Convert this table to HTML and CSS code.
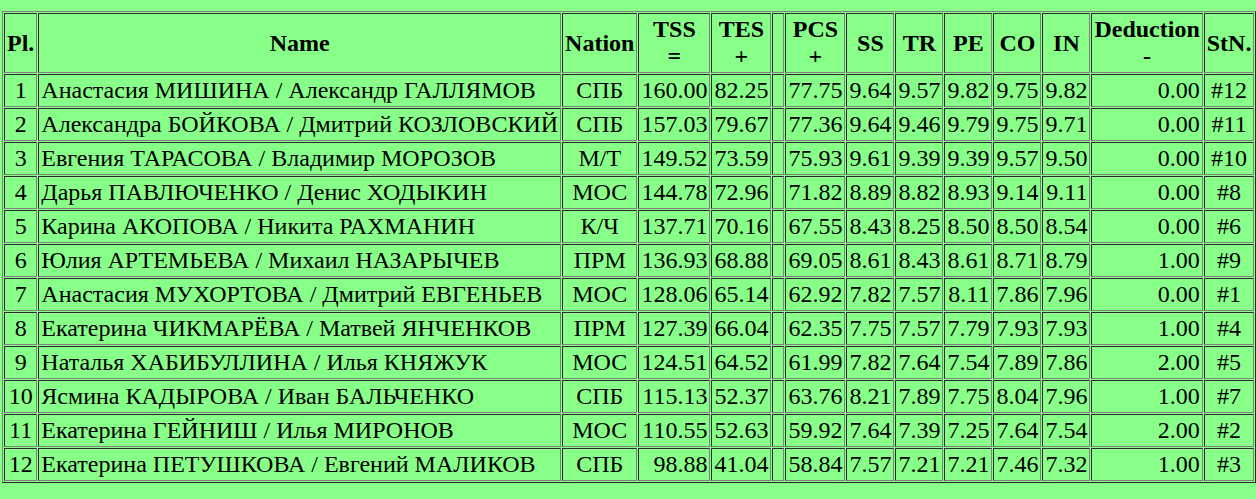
FILE: index.html
```html
<!DOCTYPE html>
<html>
<head>
<meta charset="utf-8">
<title>Results</title>
<link rel="stylesheet" href="styles.css">
</head>
<body>
<table class="res">
<thead>
<tr>
<th>Pl.</th>
<th>Name</th>
<th>Nation</th>
<th>TSS<br>=</th>
<th>TES<br>+</th>
<th class="gap">&nbsp;</th>
<th>PCS<br>+</th>
<th>SS</th>
<th>TR</th>
<th>PE</th>
<th>CO</th>
<th>IN</th>
<th>Deduction<br>-</th>
<th>StN.</th>
</tr>
</thead>
<tbody>
<tr><td class="c">1</td><td class="l">Анастасия МИШИНА / Александр ГАЛЛЯМОВ</td><td class="c">СПБ</td><td class="r">160.00</td><td class="r">82.25</td><td>&nbsp;</td><td class="r">77.75</td><td class="r">9.64</td><td class="r">9.57</td><td class="r">9.82</td><td class="r">9.75</td><td class="r">9.82</td><td class="r">0.00</td><td class="c">#12</td></tr>
<tr><td class="c">2</td><td class="l">Александра БОЙКОВА / Дмитрий КОЗЛОВСКИЙ</td><td class="c">СПБ</td><td class="r">157.03</td><td class="r">79.67</td><td>&nbsp;</td><td class="r">77.36</td><td class="r">9.64</td><td class="r">9.46</td><td class="r">9.79</td><td class="r">9.75</td><td class="r">9.71</td><td class="r">0.00</td><td class="c">#11</td></tr>
<tr><td class="c">3</td><td class="l">Евгения ТАРАСОВА / Владимир МОРОЗОВ</td><td class="c">М/Т</td><td class="r">149.52</td><td class="r">73.59</td><td>&nbsp;</td><td class="r">75.93</td><td class="r">9.61</td><td class="r">9.39</td><td class="r">9.39</td><td class="r">9.57</td><td class="r">9.50</td><td class="r">0.00</td><td class="c">#10</td></tr>
<tr><td class="c">4</td><td class="l">Дарья ПАВЛЮЧЕНКО / Денис ХОДЫКИН</td><td class="c">МОС</td><td class="r">144.78</td><td class="r">72.96</td><td>&nbsp;</td><td class="r">71.82</td><td class="r">8.89</td><td class="r">8.82</td><td class="r">8.93</td><td class="r">9.14</td><td class="r">9.11</td><td class="r">0.00</td><td class="c">#8</td></tr>
<tr><td class="c">5</td><td class="l">Карина АКОПОВА / Никита РАХМАНИН</td><td class="c">К/Ч</td><td class="r">137.71</td><td class="r">70.16</td><td>&nbsp;</td><td class="r">67.55</td><td class="r">8.43</td><td class="r">8.25</td><td class="r">8.50</td><td class="r">8.50</td><td class="r">8.54</td><td class="r">0.00</td><td class="c">#6</td></tr>
<tr><td class="c">6</td><td class="l">Юлия АРТЕМЬЕВА / Михаил НАЗАРЫЧЕВ</td><td class="c">ПРМ</td><td class="r">136.93</td><td class="r">68.88</td><td>&nbsp;</td><td class="r">69.05</td><td class="r">8.61</td><td class="r">8.43</td><td class="r">8.61</td><td class="r">8.71</td><td class="r">8.79</td><td class="r">1.00</td><td class="c">#9</td></tr>
<tr><td class="c">7</td><td class="l">Анастасия МУХОРТОВА / Дмитрий ЕВГЕНЬЕВ</td><td class="c">МОС</td><td class="r">128.06</td><td class="r">65.14</td><td>&nbsp;</td><td class="r">62.92</td><td class="r">7.82</td><td class="r">7.57</td><td class="r">8.11</td><td class="r">7.86</td><td class="r">7.96</td><td class="r">0.00</td><td class="c">#1</td></tr>
<tr><td class="c">8</td><td class="l">Екатерина ЧИКМАРЁВА / Матвей ЯНЧЕНКОВ</td><td class="c">ПРМ</td><td class="r">127.39</td><td class="r">66.04</td><td>&nbsp;</td><td class="r">62.35</td><td class="r">7.75</td><td class="r">7.57</td><td class="r">7.79</td><td class="r">7.93</td><td class="r">7.93</td><td class="r">1.00</td><td class="c">#4</td></tr>
<tr><td class="c">9</td><td class="l">Наталья ХАБИБУЛЛИНА / Илья КНЯЖУК</td><td class="c">МОС</td><td class="r">124.51</td><td class="r">64.52</td><td>&nbsp;</td><td class="r">61.99</td><td class="r">7.82</td><td class="r">7.64</td><td class="r">7.54</td><td class="r">7.89</td><td class="r">7.86</td><td class="r">2.00</td><td class="c">#5</td></tr>
<tr><td class="c">10</td><td class="l">Ясмина КАДЫРОВА / Иван БАЛЬЧЕНКО</td><td class="c">СПБ</td><td class="r">115.13</td><td class="r">52.37</td><td>&nbsp;</td><td class="r">63.76</td><td class="r">8.21</td><td class="r">7.89</td><td class="r">7.75</td><td class="r">8.04</td><td class="r">7.96</td><td class="r">1.00</td><td class="c">#7</td></tr>
<tr><td class="c">11</td><td class="l">Екатерина ГЕЙНИШ / Илья МИРОНОВ</td><td class="c">МОС</td><td class="r">110.55</td><td class="r">52.63</td><td>&nbsp;</td><td class="r">59.92</td><td class="r">7.64</td><td class="r">7.39</td><td class="r">7.25</td><td class="r">7.64</td><td class="r">7.54</td><td class="r">2.00</td><td class="c">#2</td></tr>
<tr><td class="c">12</td><td class="l">Екатерина ПЕТУШКОВА / Евгений МАЛИКОВ</td><td class="c">СПБ</td><td class="r">98.88</td><td class="r">41.04</td><td>&nbsp;</td><td class="r">58.84</td><td class="r">7.57</td><td class="r">7.21</td><td class="r">7.21</td><td class="r">7.46</td><td class="r">7.32</td><td class="r">1.00</td><td class="c">#3</td></tr>
</tbody>
</table>
</body>
</html>
```
FILE: styles.css
```css
html {
  overflow: hidden;
  background: #88ff88;
}
body {
  margin: 11px 0 0 2px;
  background: #88ff88;
  color: #000;
  font-family: "Liberation Serif", "Times New Roman", serif;
  font-size: 24px;
}
.res {
  border-collapse: separate;
  border-spacing: 1px;
  border: 1px outset #808080;
  white-space: nowrap;
  font-size: 24px;
}
.res th,
.res td {
  border: 1px inset #808080;
  padding: 2px;
  vertical-align: middle;
}
.res th {
  font-weight: bold;
  text-align: center;
}
.c { text-align: center; }
.l { text-align: left; }
.r { text-align: right; }
```
